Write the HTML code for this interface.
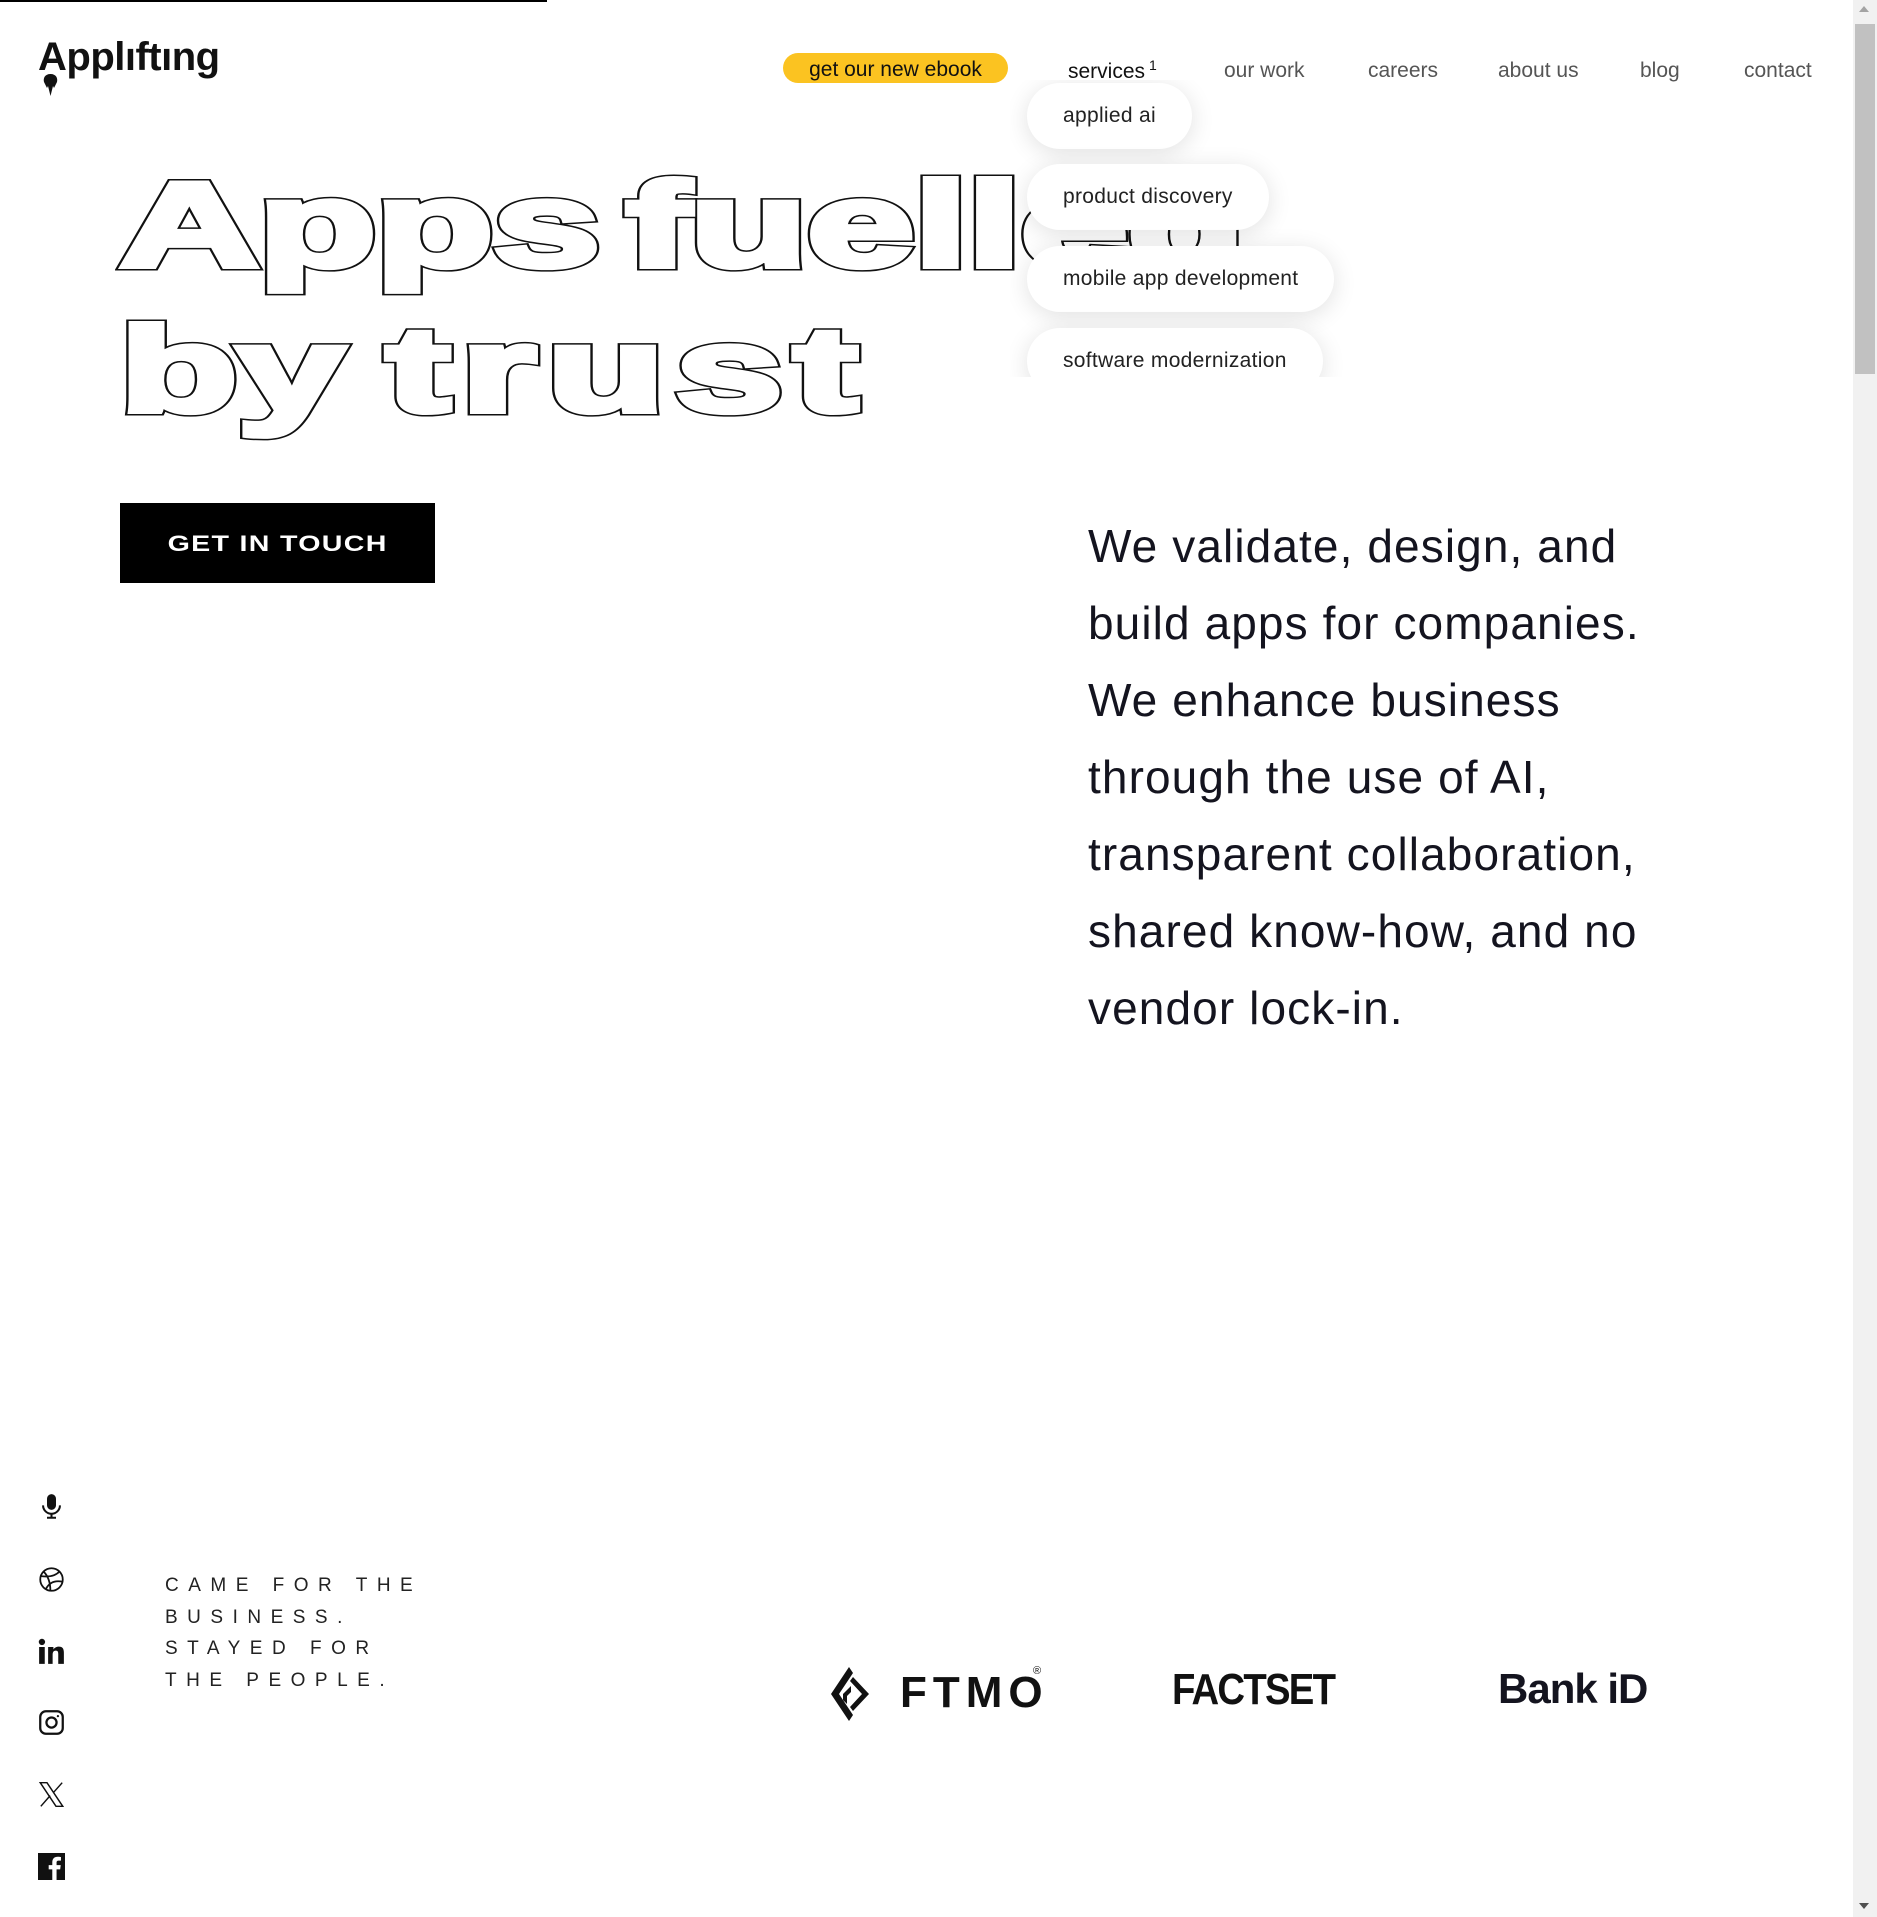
<!DOCTYPE html>
<html><head><meta charset="utf-8">
<style>
*{margin:0;padding:0;box-sizing:border-box}
html,body{width:1877px;height:1917px;overflow:hidden;background:#fff;font-family:"Liberation Sans",sans-serif;color:#14141f}
.abs{position:absolute}
.topbar{left:0;top:0;width:547px;height:2px;background:#000}
.logo{left:38px;top:35px;font-size:40px;font-weight:bold;letter-spacing:-0.5px;color:#111}
.nav{top:59px;font-size:21px;color:#555;white-space:nowrap}
.ebook{left:783px;top:53px;width:225px;height:30px;border-radius:15px;background:#fbc321;color:#111;font-size:21px;text-align:center;line-height:33px}
.dd{left:1010px;top:80px;width:370px;height:297px;overflow:hidden}
.pill{position:absolute;left:17px;background:#fff;border-radius:33px;box-shadow:0 4px 24px rgba(0,0,0,.12);font-size:21px;color:#222;padding:0 36px;height:66px;line-height:66px;white-space:nowrap;letter-spacing:0.3px}
.hl{left:120px;font-size:120px;font-weight:bold;transform-origin:0 0;white-space:nowrap;line-height:1;word-spacing:-17px;transform:scaleX(1.6)}
.hl.l2{word-spacing:-7px}
.hl.b{color:#111;-webkit-text-stroke:9px #111}
.hl.w{color:#fff;-webkit-text-stroke:6px #fff}
.hl .t{letter-spacing:7px}
.btn{left:120px;top:503px;width:315px;height:80px;background:#000;color:#fff;font-weight:bold;font-size:22px;letter-spacing:1px;text-align:center;line-height:82px}
.para{left:1088px;top:508px;font-size:46px;line-height:77px;color:#14141f;letter-spacing:1.1px}
.tag{left:165px;top:1570px;font-size:19px;letter-spacing:9.5px;line-height:31.5px;color:#222}
.ic{left:38px;width:27px;height:27px}
.scroll{left:1853px;top:0;width:24px;height:1917px;background:#f1f1f1}
.thumb{left:1855px;top:24px;width:20px;height:350px;background:#c1c1c1}
</style></head><body>
<div class="abs topbar"></div>
<div class="abs logo">Applıftıng</div>
<svg class="abs" style="left:42px;top:74px" width="17" height="22" viewBox="0 0 17 22"><path d="M8.5 0C3 0 1 4 2 8l3 6 1 -2 2.5 10 2.5-10 1 2 3-6C16 4 14 0 8.5 0z" fill="#111"/></svg>

<div class="abs ebook">get our new ebook</div>
<div class="abs nav" style="left:1068px;top:57px;color:#111">services<sup style="font-size:14px;margin-left:4px">1</sup></div>
<div class="abs nav" style="left:1224px">our work</div>
<div class="abs nav" style="left:1368px">careers</div>
<div class="abs nav" style="left:1498px">about us</div>
<div class="abs nav" style="left:1640px">blog</div>
<div class="abs nav" style="left:1744px">contact</div>

<div class="abs hl b" style="top:165px">Apps fuelled</div>
<div class="abs hl w" style="top:165px">Apps fuelled</div>
<div class="abs hl b l2" style="top:310px">by <span class="t">trust</span></div>
<div class="abs hl w l2" style="top:310px">by <span class="t">trust</span></div>

<div class="abs dd">
<div class="pill" style="top:3px">applied ai</div>
<div class="pill" style="top:84px">product discovery</div>
<div class="pill" style="top:166px">mobile app development</div>
<div class="pill" style="top:248px">software modernization</div>
</div>

<div class="abs btn"><span style="display:inline-block;transform:scaleX(1.3)">GET IN TOUCH</span></div>

<div class="abs para">We validate, design, and<br>build apps for companies.<br>We enhance business<br>through the use of AI,<br>transparent collaboration,<br>shared know-how, and no<br>vendor lock-in.</div>

<svg class="abs ic" style="top:1493px" viewBox="0 0 24 24"><rect x="8" y="1" width="8" height="14" rx="4" fill="#111"/><path d="M4.5 11a7.5 7.5 0 0 0 15 0M12 18.5V22M8 22h8" stroke="#111" stroke-width="1.8" fill="none"/></svg>
<svg class="abs ic" style="top:1566px" viewBox="0 0 24 24" fill="none" stroke="#111" stroke-width="1.6"><circle cx="12" cy="12" r="10"/><path d="M5 5c4 4 6 9 6 17M2.5 9c7 1 13 0 17-4.5M7 20.5c3-6 8-8 15-6.5"/></svg>
<svg class="abs ic" style="top:1638px" viewBox="0 0 24 24" fill="#111"><rect x="1" y="8" width="5" height="15"/><circle cx="3.5" cy="3.5" r="2.8"/><path d="M9 8h4.7v2.2C14.5 8.8 16.2 7.7 18.6 7.7 22.4 7.7 23 10.2 23 13.5V23h-5v-8.5c0-2-.3-3.3-2.2-3.3-2 0-2.8 1.4-2.8 3.5V23H9z"/></svg>
<svg class="abs ic" style="top:1709px" viewBox="0 0 24 24" fill="none" stroke="#111" stroke-width="2"><rect x="2" y="2" width="20" height="20" rx="5"/><circle cx="12" cy="12" r="4.5"/><circle cx="17.7" cy="6.3" r="1" fill="#111" stroke="none"/></svg>
<svg class="abs ic" style="top:1781px" viewBox="0 0 24 24" fill="none" stroke="#111" stroke-width="1.3"><path d="M2 1.5h6l14 21h-6zM21.5 1.5 13.5 10.5M2.5 22.5l8.3-9.5"/></svg>
<svg class="abs ic" style="top:1853px" viewBox="0 0 24 24"><rect x="0" y="0" width="24" height="24" fill="#111"/><path d="M16.5 24v-9.5h3.2l.5-3.7h-3.7V8.6c0-1 .3-1.8 1.9-1.8h2V3.5c-.4 0-1.5-.2-2.9-.2-2.9 0-4.8 1.7-4.8 5v2.5H9.5v3.7h3.2V24z" fill="#fff"/></svg>

<div class="abs tag">CAME FOR THE<br>BUSINESS.<br>STAYED FOR<br>THE PEOPLE.</div>

<svg class="abs" style="left:831px;top:1667px" width="40" height="54" viewBox="0 0 40 54"><path d="M18 0 0 27l18 27 4-6L8 27 22 6zM22 10l16 17-16 17-3-4 12-13-12-13z" fill="#111"/><path d="M12 27l8-8v6l-4 4v8l-4-4z" fill="#111"/></svg>
<div class="abs" style="left:900px;top:1671px;font-size:44px;font-weight:bold;letter-spacing:6px;color:#111;line-height:1">FTMO</div>
<div class="abs" style="left:1033px;top:1665px;font-size:11px;color:#111">®</div>
<div class="abs" style="left:1172px;top:1668px;font-size:44px;font-weight:bold;color:#111;line-height:1;letter-spacing:-2px;transform:scaleX(0.87);transform-origin:0 0">FACTSET</div>
<div class="abs" style="left:1498px;top:1668px;font-size:42px;font-weight:bold;color:#14141f;line-height:1;letter-spacing:-1px">Bank iD</div>

<div class="abs scroll"></div>
<div class="abs thumb"></div>
<div class="abs" style="left:1859px;top:6px;width:0;height:0;border-left:5px solid transparent;border-right:5px solid transparent;border-bottom:6px solid #a3a3a3"></div>
<div class="abs" style="left:1859px;top:1903px;width:0;height:0;border-left:5px solid transparent;border-right:5px solid transparent;border-top:6px solid #505050"></div>
</body></html>
